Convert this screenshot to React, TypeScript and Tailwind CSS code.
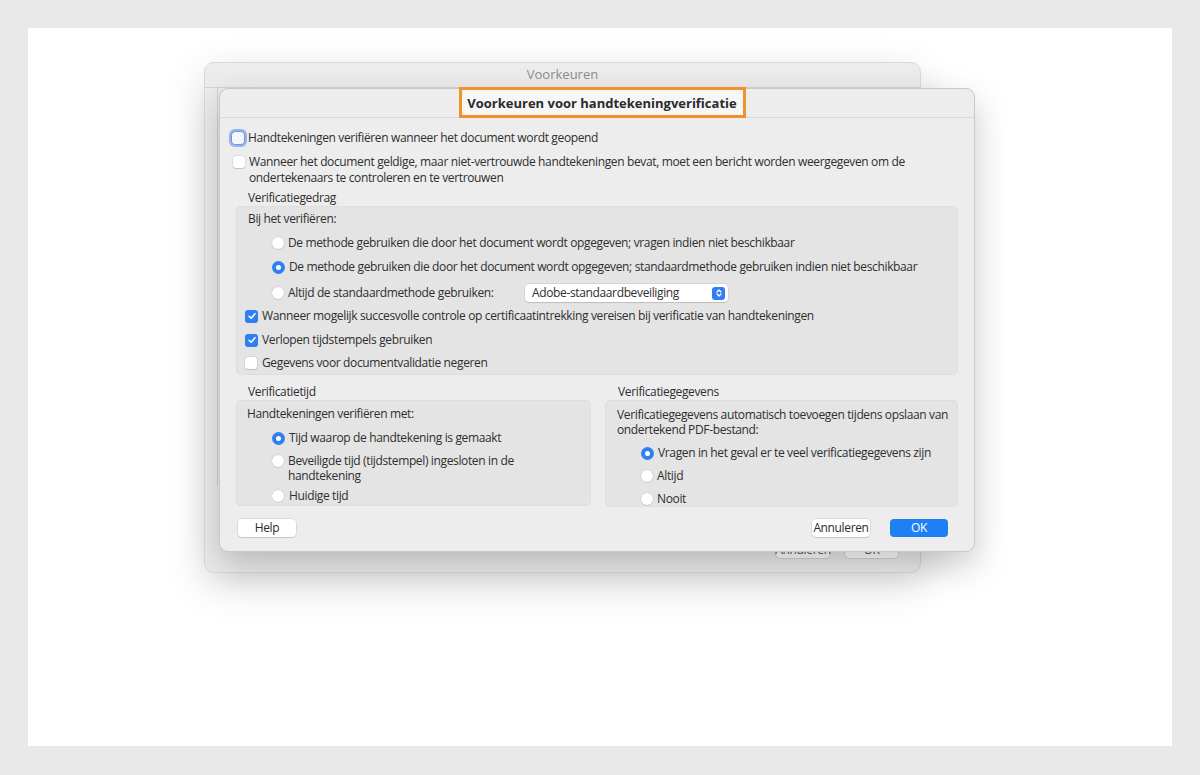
import React from "react";

const font = { fontFamily: '"Open Sans", "Liberation Sans", sans-serif' };

function Check({ checked, focus }: { checked?: boolean; focus?: boolean }) {
  if (checked) {
    return (
      <span className="flex h-[13px] w-[13px] shrink-0 items-center justify-center rounded-[3px] bg-[#2f7ff2]">
        <svg viewBox="0 0 12 12" className="h-[10px] w-[10px]">
          <path d="M2.5 6.3 L5 8.7 L9.6 3.3" fill="none" stroke="white" strokeWidth="1.9" strokeLinecap="round" strokeLinejoin="round" />
        </svg>
      </span>
    );
  }
  if (focus) {
    return (
      <span className="block h-[14px] w-[14px] shrink-0 rounded-[4px] border border-[#6f97e6] bg-[#f4f6fb] shadow-[0_0_0_2px_rgba(120,160,235,0.75)]" />
    );
  }
  return <span className="block h-[12px] w-[12px] shrink-0 rounded-[3px] bg-white shadow-[0_0_0_0.5px_rgba(0,0,0,0.12),0_0.5px_1px_rgba(0,0,0,0.12)]" />;
}

function Radio({ on }: { on?: boolean }) {
  if (on) {
    return (
      <span className="flex h-[13px] w-[13px] shrink-0 items-center justify-center rounded-full bg-[#2f7ff2]">
        <span className="h-[5px] w-[5px] rounded-full bg-white" />
      </span>
    );
  }
  return <span className="block h-[12px] w-[12px] shrink-0 rounded-full bg-white shadow-[0_0_0_0.5px_rgba(0,0,0,0.1),0_0.5px_1px_rgba(0,0,0,0.12)]" />;
}

function Button({ children, primary }: { children: React.ReactNode; primary?: boolean }) {
  return (
    <div
      className={`flex h-[18px] w-[58px] items-center justify-center rounded-[4px] text-[12px] ${
        primary
          ? "bg-[#1f80f5] text-white"
          : "bg-white text-[#2b2b2b] shadow-[0_0_0_0.5px_rgba(0,0,0,0.14),0_1px_1px_rgba(0,0,0,0.1)]"
      }`}
    >
      {children}
    </div>
  );
}

export default function App() {
  return (
    <div className="h-[775px] w-[1200px] bg-[#e9e9e9] px-[28px] pt-[28px]" style={font}>
      <div className="relative h-[718px] w-[1144px] overflow-hidden bg-white">
        {/* back window */}
        <div className="absolute left-[176px] top-[34px] flex h-[511px] w-[717px] flex-col rounded-[10px] border border-[#d9d9d9] bg-[#ececec] shadow-[0_12px_40px_rgba(0,0,0,0.14)]">
          <div className="flex h-[25px] items-center justify-center border-b border-[#d4d4d4] text-[13px] text-[#8c8c8c]">
            Voorkeuren
          </div>
          <div className="flex flex-1">
            <div className="ml-[12px] mb-[56px] w-px bg-[#d2d2d2]" />
          </div>
          <div className="flex justify-end gap-[15px] pb-[14px] pr-[22px] tracking-[-0.3px] text-[#555]">
            <div className="flex h-[16px] w-[54px] items-center justify-center rounded-[4px] bg-white text-[12px] shadow-[0_0_0_0.5px_rgba(0,0,0,0.2)]">Annuleren</div>
            <div className="flex h-[16px] w-[53px] items-center justify-center rounded-[4px] bg-white text-[12px] shadow-[0_0_0_0.5px_rgba(0,0,0,0.2)]">OK</div>
          </div>
        </div>

        {/* front dialog */}
        <div className="absolute left-[191px] top-[60px] w-[756px] rounded-[9px] border border-[#c9c9c9] bg-[#ededed] text-[12px] leading-[16px] tracking-[-0.36px] text-[#2e2e2e] shadow-[0_14px_34px_rgba(0,0,0,0.22)]">
          <div className="flex h-[29px] justify-center border-b border-[#d8d8d8] pl-[10px] tracking-normal">
            <div className="-mt-[2px] flex h-[31px] w-[287px] items-center justify-center border-[3px] border-[#f0922b] bg-[#f6f6f6] text-[13px] font-bold text-[#2a2a2a]">
              Voorkeuren voor handtekeningverificatie
            </div>
          </div>

          <div className="px-[16px] pb-[14px] pt-[12px]">
            <div className="-ml-[5px] flex h-[16px] items-center gap-[3px]">
              <Check focus />
              <span>Handtekeningen verifiëren wanneer het document wordt geopend</span>
            </div>
            <div className="-ml-[3px] mt-[8px] flex gap-[4px]">
              <div className="pt-[2px]">
                <Check />
              </div>
              <span>
                Wanneer het document geldige, maar niet-vertrouwde handtekeningen bevat, moet een bericht worden weergegeven om de
                <br />
                ondertekenaars te controleren en te vertrouwen
              </span>
            </div>
            <div className="mt-[4px] pl-[12px]">Verificatiegedrag</div>

            <div className="rounded-[5px] border border-[#dedede] bg-[#e4e4e4] pb-[3px] pl-[8px] pt-[4px]">
              <div className="pl-[3px]">Bij het verifiëren:</div>
              <div className="mt-[8px] flex h-[16px] items-center gap-[4px] pl-[27px]">
                <Radio />
                <span>De methode gebruiken die door het document wordt opgegeven; vragen indien niet beschikbaar</span>
              </div>
              <div className="mt-[8px] flex h-[16px] items-center gap-[4px] pl-[27px]">
                <Radio on />
                <span>De methode gebruiken die door het document wordt opgegeven; standaardmethode gebruiken indien niet beschikbaar</span>
              </div>
              <div className="mt-[10px] flex h-[16px] items-center gap-[4px] pl-[27px]">
                <Radio />
                <span className="w-[233px]">Altijd de standaardmethode gebruiken:</span>
                <div className="flex h-[18px] w-[203px] items-center justify-between rounded-[4px] bg-white pl-[7px] pr-[3px] shadow-[0_0_0_0.5px_rgba(0,0,0,0.1),0_0.5px_1px_rgba(0,0,0,0.12)]">
                  <span>Adobe-standaardbeveiliging</span>
                  <span className="flex h-[13px] w-[13px] items-center justify-center rounded-[3px] bg-[#2f7ff2]">
                    <svg viewBox="0 0 10 10" className="h-[10px] w-[10px]">
                      <path d="M3 4 L5 2 L7 4 M3 6 L5 8 L7 6" fill="none" stroke="white" strokeWidth="1.3" strokeLinecap="round" strokeLinejoin="round" />
                    </svg>
                  </span>
                </div>
              </div>
              <div className="mt-[7px] flex h-[16px] items-center gap-[4px]">
                <Check checked />
                <span>Wanneer mogelijk succesvolle controle op certificaatintrekking vereisen bij verificatie van handtekeningen</span>
              </div>
              <div className="mt-[8px] flex h-[16px] items-center gap-[4px]">
                <Check checked />
                <span>Verlopen tijdstempels gebruiken</span>
              </div>
              <div className="mt-[7px] flex h-[16px] items-center gap-[5px]">
                <Check />
                <span>Gegevens voor documentvalidatie negeren</span>
              </div>
            </div>

            <div className="mt-[9px] flex gap-[14px]">
              <div className="w-[356px]">
                <div className="pl-[12px]">Verificatietijd</div>
                <div className="h-[106px] rounded-[5px] border border-[#dedede] bg-[#e4e4e4] pl-[10px] pt-[5px]">
                  <div>Handtekeningen verifiëren met:</div>
                  <div className="mt-[8px] flex h-[16px] items-center gap-[4px] pl-[25px]">
                    <Radio on />
                    <span>Tijd waarop de handtekening is gemaakt</span>
                  </div>
                  <div className="mt-[7px] flex gap-[4px] pl-[25px] leading-[15px]">
                    <div className="pt-[2px]">
                      <Radio />
                    </div>
                    <span className="w-[250px]">Beveiligde tijd (tijdstempel) ingesloten in de handtekening</span>
                  </div>
                  <div className="mt-[5px] flex h-[16px] items-center gap-[5px] pl-[25px]">
                    <Radio />
                    <span>Huidige tijd</span>
                  </div>
                </div>
              </div>
              <div className="w-[354px]">
                <div className="pl-[13px]">Verificatiegegevens</div>
                <div className="h-[107px] rounded-[5px] border border-[#dedede] bg-[#e4e4e4] pl-[11px] pt-[6px]">
                  <div className="leading-[15px]">
                    Verificatiegegevens automatisch toevoegen tijdens opslaan van
                    <br />
                    ondertekend PDF-bestand:
                  </div>
                  <div className="mt-[8px] flex h-[16px] items-center gap-[4px] pl-[24px]">
                    <Radio on />
                    <span>Vragen in het geval er te veel verificatiegegevens zijn</span>
                  </div>
                  <div className="mt-[7px] flex h-[16px] items-center gap-[4px] pl-[24px]">
                    <Radio />
                    <span>Altijd</span>
                  </div>
                  <div className="mt-[7px] flex h-[16px] items-center gap-[4px] pl-[24px]">
                    <Radio />
                    <span>Nooit</span>
                  </div>
                </div>
              </div>
            </div>

            <div className="mt-[12px] flex items-center pr-[10px]">
              <div className="ml-[2px]">
                <Button>Help</Button>
              </div>
              <div className="flex-1" />
              <div className="flex gap-[20px]">
                <Button>Annuleren</Button>
                <Button primary>OK</Button>
              </div>
            </div>
          </div>
        </div>
      </div>
    </div>
  );
}
